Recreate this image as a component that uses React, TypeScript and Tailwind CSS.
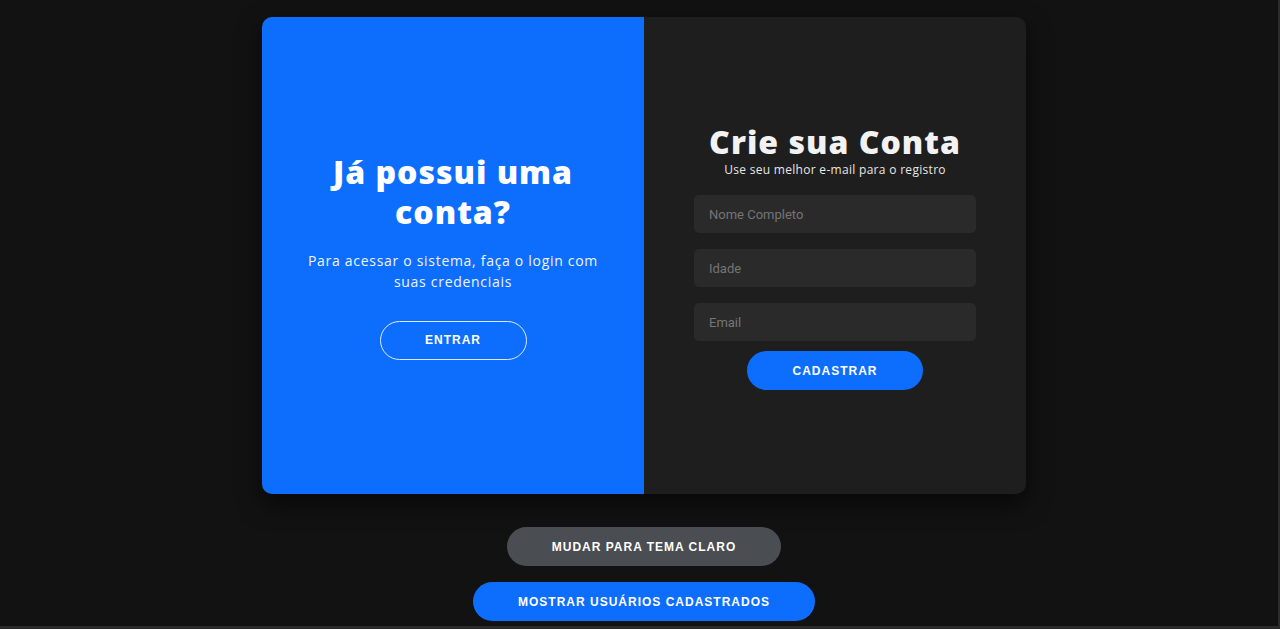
const heading = "font-['Open_Sans',sans-serif] font-extrabold tracking-[1px]";
const body = "font-['Open_Sans',sans-serif]";
const btn = "font-['Liberation_Sans',Arial,sans-serif] font-bold uppercase tracking-[1px] text-[12px] rounded-full";

const Field = ({ placeholder }: { placeholder: string }) => (
  <input
    placeholder={placeholder}
    className="w-[282px] h-[38px] rounded-[5px] bg-[#2a2a2a] px-[15px] text-[13px] text-white placeholder:text-[#757575] outline-none font-['Roboto',sans-serif]"
  />
);

export default function App() {
  return (
    <div className="min-h-[629px] bg-[#121212] border-r-2 border-b-[3px] border-[#2b2b2b] flex flex-col items-center pt-[17px] pl-[10px]">
      <div className="flex w-[764px] h-[477px] rounded-[10px] overflow-hidden shadow-[0_10px_25px_rgba(0,0,0,0.6)]">
        <div className="w-[382px] bg-[#0d6efd] flex flex-col items-center justify-center px-10 text-center text-white">
          <h1 className={`${heading} text-[32px] leading-[40px] w-[270px]`}>Já possui uma conta?</h1>
          <p className={`${body} text-[14px] leading-[21px] tracking-[0.7px] mt-[18px] w-[310px] text-[#f0f4ff]`}>
            Para acessar o sistema, faça o login com suas credenciais
          </p>
          <button className={`${btn} mt-[29px] w-[147px] h-[39px] border border-[#dfe9ff] text-white`}>Entrar</button>
        </div>
        <div className="w-[382px] bg-[#1e1e1e] flex flex-col items-center pt-[105px]">
          <h2 className={`${heading} text-[32px] leading-[40px] tracking-[0.8px] text-[#f2f2f2]`}>Crie sua Conta</h2>
          <p className={`${body} text-[12px] leading-[16px] tracking-[0.3px] text-[#e6e6e6]`}>Use seu melhor e-mail para o registro</p>
          <div className="flex flex-col gap-[16px] mt-[17px]">
            <Field placeholder="Nome Completo" />
            <Field placeholder="Idade" />
            <Field placeholder="Email" />
          </div>
          <button className={`${btn} mt-[10px] w-[176px] h-[39px] bg-[#0d6efd] text-white`}>Cadastrar</button>
        </div>
      </div>
      <button className={`${btn} mt-[33px] w-[274px] h-[39px] bg-[#4a4d52] text-white`}>Mudar para tema claro</button>
      <button className={`${btn} mt-[16px] w-[342px] h-[39px] bg-[#0d6efd] text-white`}>Mostrar usuários cadastrados</button>
    </div>
  );
}
